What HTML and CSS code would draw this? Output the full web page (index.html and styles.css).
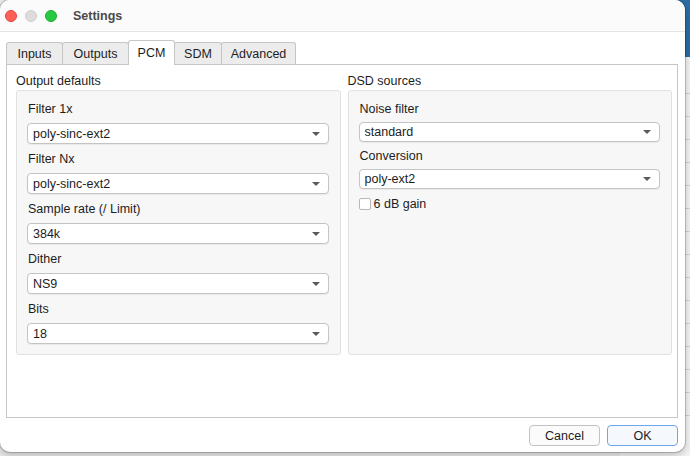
FILE: index.html
```html
<!DOCTYPE html>
<html lang="en">

<head>
    <meta charset="UTF-8">
    <meta name="viewport" content="width=device-width, initial-scale=1.0">
    <title>Settings</title>
    <link rel="stylesheet" href="styles.css">
</head>

<body>
    <div class="desktop">
        <!-- window behind the dialog -->
        <div class="backwin">
            <div class="backwin-bar"></div>
            <div class="backwin-rows"></div>
        </div>

        <div class="dialog">
            <div class="titlebar">
                <span class="light red"></span>
                <span class="light grey"></span>
                <span class="light green"></span>
                <span class="title">Settings</span>
            </div>

            <div class="dialog-body">
                <div class="tabs">
                    <div class="tab tab-inputs">Inputs</div>
                    <div class="tab tab-outputs">Outputs</div>
                    <div class="tab tab-pcm active">PCM</div>
                    <div class="tab tab-sdm">SDM</div>
                    <div class="tab tab-advanced">Advanced</div>
                </div>

                <div class="pane">
                    <div class="column">
                        <div class="section-title">Output defaults</div>
                        <div class="group">
                            <div class="field-label">Filter 1x</div>
                            <div class="combo"><span>poly-sinc-ext2</span><i class="arrow"></i></div>
                            <div class="field-label">Filter Nx</div>
                            <div class="combo"><span>poly-sinc-ext2</span><i class="arrow"></i></div>
                            <div class="field-label">Sample rate (/ Limit)</div>
                            <div class="combo"><span>384k</span><i class="arrow"></i></div>
                            <div class="field-label">Dither</div>
                            <div class="combo"><span>NS9</span><i class="arrow"></i></div>
                            <div class="field-label">Bits</div>
                            <div class="combo"><span>18</span><i class="arrow"></i></div>
                        </div>
                    </div>

                    <div class="column">
                        <div class="section-title">DSD sources</div>
                        <div class="group compact">
                            <div class="field-label">Noise filter</div>
                            <div class="combo"><span>standard</span><i class="arrow"></i></div>
                            <div class="field-label">Conversion</div>
                            <div class="combo"><span>poly-ext2</span><i class="arrow"></i></div>
                            <label class="check">
                                <span class="check-box"></span>
                                <span>6 dB gain</span>
                            </label>
                        </div>
                    </div>
                </div>

                <div class="buttons">
                    <button class="btn">Cancel</button>
                    <button class="btn default">OK</button>
                </div>
            </div>
        </div>
    </div>
</body>

</html>
```

FILE: styles.css
```css
body {
    margin: 0;
    font-family: "Liberation Sans", Arial, sans-serif;
    font-size: 12.5px;
    color: #1d1d1d;
    background-color: #ececec;
}
.desktop {
    position: relative;
    width: 690px;
    height: 456px;
    overflow: hidden;
}
.backwin {
    position: absolute;
    top: 0;
    left: 620px;
    width: 70px;
    height: 456px;
    background-color: #f5f5f5;
}
.backwin-bar {
    height: 57px;
    background-color: #2e6da4;
}
.backwin-rows {
    height: 360px;
    margin-top: 14px;
    background: repeating-linear-gradient(#f5f5f5 0, #f5f5f5 22px, #d4d4d4 22px, #d4d4d4 23px);
}
.dialog {
    position: relative;
    width: 685px;
    height: 452px;
    background-color: white;
    border-radius: 10px;
    box-shadow: 0 0 0 1px rgba(0,0,0,0.18), 0 3px 10px rgba(0,0,0,0.25);
    overflow: hidden;
}
.titlebar {
    display: flex;
    align-items: center;
    height: 31px;
    padding-left: 5px;
    background-color: #fbfbfb;
    border-bottom: 1px solid #e4e4e4;
}
.light {
    width: 12px;
    height: 12px;
    border-radius: 50%;
    margin-right: 8px;
    box-sizing: border-box;
}
.light.red {
    background-color: #fe5f57;
    border: 1px solid #e2463f;
}
.light.grey {
    background-color: #dcdcdc;
    border: 1px solid #cfcfcf;
}
.light.green {
    background-color: #28c840;
    border: 1px solid #1fab34;
}
.title {
    margin-left: 8px;
    font-weight: bold;
    color: #4a4a4a;
}
.dialog-body {
    padding: 8px 7px 0 6px;
}
.tabs {
    display: flex;
    align-items: flex-end;
    height: 24px;
}
.tab {
    box-sizing: border-box;
    height: 22px;
    line-height: 22px;
    text-align: center;
    background-color: #ececec;
    border: 1px solid #c6c6c6;
    border-bottom: none;
    border-radius: 3px 3px 0 0;
    margin-right: -1px;
}
.tab-inputs { width: 57px; }
.tab-outputs { width: 67px; }
.tab-pcm { width: 47px; }
.tab-sdm { width: 48px; }
.tab-advanced { width: 75px; }
.tab.active {
    position: relative;
    z-index: 1;
    height: 25px;
    line-height: 25px;
    margin-bottom: -1px;
    background-color: white;
}
.pane {
    display: flex;
    gap: 7px;
    height: 344px;
    padding: 8px 5px 0 9px;
    border: 1px solid #c6c6c6;
}
.column {
    flex: 1;
}
.section-title {
    line-height: 16px;
    margin-bottom: 1px;
}
.group {
    height: 260px;
    padding: 3px 11px 0 10px;
    background-color: #f7f7f7;
    border: 1px solid #e1e1e1;
    border-radius: 3px;
}
.field-label {
    line-height: 16px;
    padding: 7px 0 6px 1px;
}
.combo {
    display: flex;
    align-items: center;
    justify-content: space-between;
    height: 19px;
    padding: 0 8px 0 5px;
    background-color: white;
    border: 1px solid #c4c4c4;
    border-radius: 4px;
    box-shadow: 0 1px 1px rgba(0,0,0,0.06);
}
.arrow {
    width: 0;
    height: 0;
    border-left: 4px solid transparent;
    border-right: 4px solid transparent;
    border-top: 4px solid #5a5a5a;
}
.group.compact {
    height: 259px;
    padding-top: 4px;
}
.compact .field-label {
    padding: 6px 0 5px 1px;
}
.compact .combo {
    height: 18px;
}
.check {
    display: flex;
    align-items: center;
    gap: 3px;
    margin-top: 8px;
}
.check-box {
    width: 10px;
    height: 10px;
    background-color: white;
    border: 1px solid #b8b8b8;
    border-radius: 2px;
}
.buttons {
    display: flex;
    justify-content: flex-end;
    gap: 7px;
    margin-top: 7px;
}
.btn {
    width: 71px;
    height: 21px;
    padding: 0;
    font-family: inherit;
    font-size: 12.5px;
    color: #1d1d1d;
    background-color: #fbfbfb;
    border: 1px solid #c2c2c2;
    border-radius: 4px;
}
.btn.default {
    background-color: #f5f9fe;
    border-color: #6ea6ea;
}
```
